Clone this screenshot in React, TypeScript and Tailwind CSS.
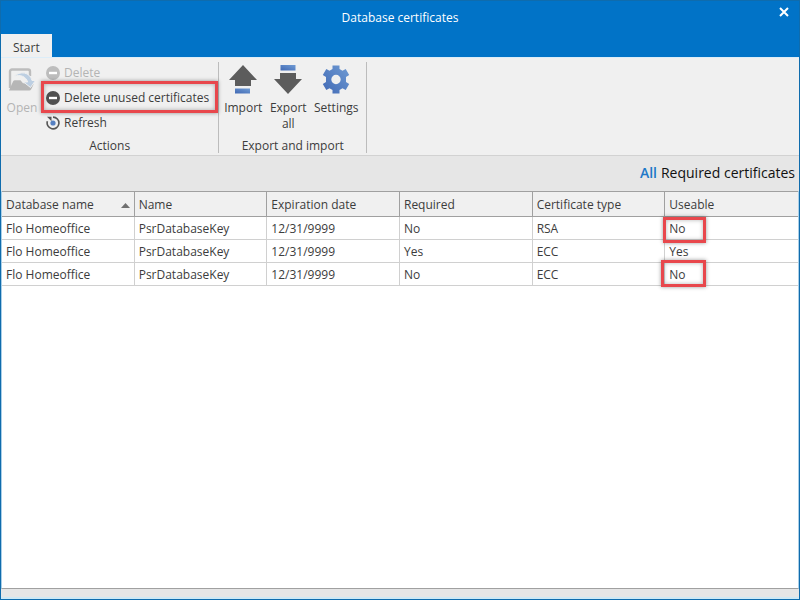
import { useState, type ReactNode } from "react";

interface Certificate {
  id: number;
  database: string;
  name: string;
  expires: string;
  required: boolean;
  type: string;
  useable: boolean;
  mark?: string;
}

const certificates: Certificate[] = [
  { id: 1, database: "Flo Homeoffice", name: "PsrDatabaseKey", expires: "12/31/9999", required: false, type: "RSA", useable: false, mark: "-left-0.5 top-0 h-[26px] w-[43px]" },
  { id: 2, database: "Flo Homeoffice", name: "PsrDatabaseKey", expires: "12/31/9999", required: true, type: "ECC", useable: true },
  { id: 3, database: "Flo Homeoffice", name: "PsrDatabaseKey", expires: "12/31/9999", required: false, type: "ECC", useable: false, mark: "-left-1 -top-[3px] h-[27px] w-[45px]" },
];

const columns = ["Database name", "Name", "Expiration date", "Required", "Certificate type", "Useable"];

function Highlight({ className }: { className: string }) {
  return (
    <span
      aria-hidden="true"
      className={`pointer-events-none absolute z-10 border-3 border-[#e8474c] shadow-[0_0_4px_rgba(0,0,0,0.4),inset_0_0_4px_rgba(0,0,0,0.3)] ${className}`}
    />
  );
}

function OpenIcon() {
  return (
    <svg width="28" height="24" viewBox="0 0 28 24" fill="none">
      <path d="M2 20V3.500A2 2 0 0 1 4 1.500h16a2 2 0 0 1 2 2V8" stroke="#bdbdbd" strokeWidth="2.400" />
      <path d="M1 22.500 5 13.500q.6-1.300 2-1.300h5.500l2.500 3h9q2 0 1.200 2l-2 4q-.6 1.300-2 1.300Z" fill="#b6b6b6" />
      <path d="M6 8.500C12 2.500 22 4 24 12.500h3.500L22.500 19.500 15.500 14h4.200C18 8.500 12 6 6 8.500Z" fill="#bdcfe2" stroke="#f0f0f0" />
    </svg>
  );
}

function MinusIcon() {
  return (
    <svg width="14" height="14" viewBox="0 0 14 14">
      <circle cx="7" cy="7" r="7" fill="currentColor" />
      <path d="M3 7h8" stroke="#fff" strokeWidth="2.4" />
    </svg>
  );
}

function RefreshIcon() {
  return (
    <svg width="14" height="14" viewBox="0 0 14 14" fill="none">
      <path d="M7 1.100A5.900 5.900 0 1 1 1.400 5.200" stroke="#555" strokeWidth="1.600" />
      <path d="M1 .8h4.500v4.400Z" fill="#555" />
      <circle cx="7" cy="7" r="2.600" fill="#5580c2" />
    </svg>
  );
}

function BlueGradient({ id }: { id: string }) {
  return (
    <linearGradient id={id} x1="0" y1="1" x2="1" y2="0">
      <stop offset="0" stopColor="#4169b4" />
      <stop offset="1" stopColor="#6f9bd4" />
    </linearGradient>
  );
}

function ImportIcon() {
  return (
    <svg width="28" height="29" viewBox="0 0 28 29">
      <BlueGradient id="import-blue" />
      <path d="M14 0 28 15h-6v6H6v-6H0Z" fill="#5c5c5c" />
      <path d="M6 23.500h15v5H6Z" fill="url(#import-blue)" />
    </svg>
  );
}

function ExportIcon() {
  return (
    <svg width="28" height="29" viewBox="0 0 28 29">
      <BlueGradient id="export-blue" />
      <path d="M6.500 0h15v5.500h-15Z" fill="url(#export-blue)" />
      <path d="M6 8h16v6h6L14 29 0 14h6Z" fill="#5c5c5c" />
    </svg>
  );
}

function SettingsIcon() {
  return (
    <svg width="28" height="29" viewBox="0 0 28 29">
      <BlueGradient id="settings-blue" />
      <path
        fill="url(#settings-blue)"
        fillRule="evenodd"
        d="M10.500.5h7v3.600l3 1.700 3.200-1.800 3.500 6-3.200 1.900v5.200l3.200 1.900-3.500 6-3.200-1.800-3 1.700v3.600h-7v-3.600l-3-1.700L4.300 25l-3.500-6L4 17.100v-5.200L.8 10l3.500-6 3.200 1.800 3-1.700ZM14 9.800a4.700 4.700 0 1 0 0 9.400 4.700 4.700 0 0 0 0-9.400Z"
      />
    </svg>
  );
}

function LargeButton({ icon, label, className, disabled }: { icon: ReactNode; label: string; className: string; disabled?: boolean }) {
  return (
    <button
      disabled={disabled}
      className={`flex flex-col items-center gap-1.5 pt-[3px] leading-4 disabled:text-[#b4b4b4] ${className}`}
    >
      <span className="flex h-[29px] items-center">{icon}</span>
      {label}
    </button>
  );
}

function SmallButton({ icon, label, disabled }: { icon: ReactNode; label: string; disabled?: boolean }) {
  return (
    <button disabled={disabled} className="flex h-[22px] items-center gap-1 whitespace-nowrap disabled:text-[#b4b4b4]">
      {icon}
      <span>{label}</span>
    </button>
  );
}

function RibbonGroup({ title, children }: { title: string; children: ReactNode }) {
  return (
    <section className="mt-1 mb-0.5 flex flex-col border-r border-[#bcbcbc]">
      <div className="flex flex-1">{children}</div>
      <h2 className="text-center leading-[14px]">{title}</h2>
    </section>
  );
}

export default function App() {
  const [filter, setFilter] = useState("all");
  const rows = filter === "all" ? certificates : certificates.filter((c) => c.required);

  return (
    <div className="flex min-h-screen flex-col border border-[#0f6cad] bg-white font-['Open_Sans','Noto_Sans',sans-serif] text-xs text-[#3c3c3c]">
      <header className="relative bg-[#0173c7] text-white">
        <h1 className="pt-[9px] text-center leading-4">Database certificates</h1>
        <button aria-label="Close" className="absolute top-1.5 right-2.5">
          <svg width="10" height="10" viewBox="0 0 10 10" stroke="currentColor" strokeWidth="2">
            <path d="m1 1 8 8M9 1 1 9" />
          </svg>
        </button>
        <div role="tablist" className="mt-2 flex">
          <button role="tab" aria-selected="true" className="bg-[#f0f0f0] px-3 pt-1.5 pb-px leading-4 text-[#3c3c3c]">
            Start
          </button>
        </div>
      </header>

      <div className="flex h-[99px] border-t border-b border-t-[#dcedf8] border-b-[#d2d2d2] bg-[#f0f0f0]">
        <RibbonGroup title="Actions">
          <LargeButton icon={<OpenIcon />} label="Open" className="mr-[3px] w-[42px]" disabled />
          <div className="relative flex flex-col gap-[3px] pr-[9px]">
            <SmallButton icon={<span className="text-[#bdbdbd]"><MinusIcon /></span>} label="Delete" disabled />
            <SmallButton icon={<span className="text-[#505050]"><MinusIcon /></span>} label="Delete unused certificates" />
            <SmallButton icon={<RefreshIcon />} label="Refresh" />
            <Highlight className="top-[19px] right-0 -left-[5px] h-8" />
          </div>
        </RibbonGroup>
        <RibbonGroup title="Export and import">
          <LargeButton icon={<ImportIcon />} label="Import" className="w-12" />
          <LargeButton icon={<ExportIcon />} label="Export all" className="w-[42px]" />
          <LargeButton icon={<SettingsIcon />} label="Settings" className="mr-[3px] w-[54px]" />
        </RibbonGroup>
      </div>

      <div className="flex h-[35px] items-center justify-end gap-1 bg-[#e6e6e6] pr-1 pb-0.5 text-sm text-[#111]">
        <button aria-pressed={filter === "all"} onClick={() => setFilter("all")} className="aria-pressed:font-semibold aria-pressed:text-[#2078c8]">
          All
        </button>
        <button aria-pressed={filter === "required"} onClick={() => setFilter("required")} className="aria-pressed:font-semibold aria-pressed:text-[#2078c8]">
          Required certificates
        </button>
      </div>

      <main className="flex-1 border-x border-b border-x-[#a9cfe8] border-b-[#a0a0a0]">
        <table className="w-full table-fixed border-separate border-spacing-0 text-left leading-4">
          <thead className="bg-[#f0f0f0]">
            <tr className="h-[26px]">
              {columns.map((column, i) => (
                <th key={column} className="border-y border-r border-[#a0a0a0] px-1 pt-0.5 font-normal last:border-r-0">
                  <div className="flex items-center justify-between">
                    {column}
                    {i === 0 && (
                      <svg width="9" height="5" viewBox="0 0 9 5">
                        <path d="M0 5 4.500 0 9 5Z" fill="#707070" />
                      </svg>
                    )}
                  </div>
                </th>
              ))}
            </tr>
          </thead>
          <tbody>
            {rows.map((c) => (
              <tr key={c.id} className="h-[23px] *:border-r *:border-b *:border-[#d0d0d0] *:px-1 *:pt-0.5 *:last:border-r-0">
                <td>{c.database}</td>
                <td>{c.name}</td>
                <td>{c.expires}</td>
                <td>{c.required ? "Yes" : "No"}</td>
                <td>{c.type}</td>
                <td className="relative">
                  {c.useable ? "Yes" : "No"}
                  {c.mark && <Highlight className={c.mark} />}
                </td>
              </tr>
            ))}
          </tbody>
        </table>
      </main>
      <footer className="h-2.5 border-b-2 border-[#cfe9f5] bg-[#e6e6e6]" />
    </div>
  );
}
